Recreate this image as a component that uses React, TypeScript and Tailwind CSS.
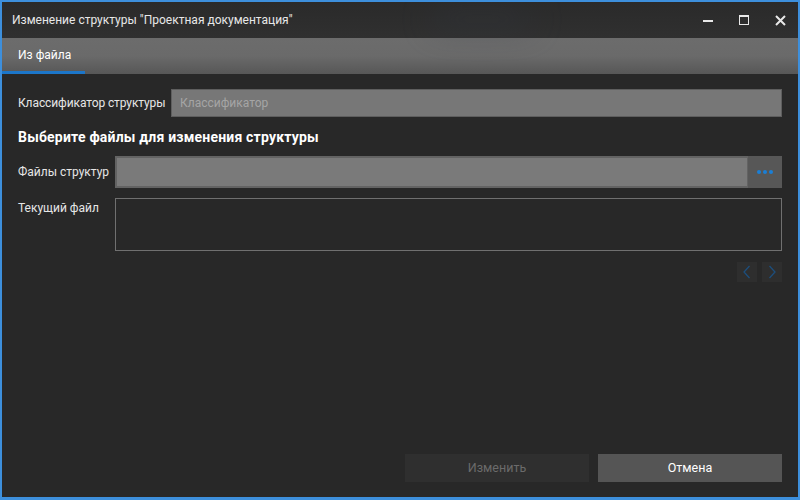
import React from "react";

export default function App() {
  const font = { fontFamily: 'Roboto, "Noto Sans", sans-serif' };
  return (
    <div
      className="w-[800px] h-[500px] border-2 border-b-[3px] border-[#3d8fdc] bg-[#282828] flex flex-col overflow-hidden text-[#e6e6e6]"
      style={font}
    >
      {/* Title bar */}
      <div className="h-[36px] shrink-0 flex items-center bg-gradient-to-b from-[#2a2a2a] to-[#303030] relative">
        <div className="absolute left-[430px] top-[10px] w-[100px] h-[14px] rounded-full bg-[#323842] blur-lg opacity-50" />
        <span className="pl-[10px] text-[12px] text-[#e8e8e8] whitespace-nowrap relative">
          Изменение структуры "Проектная документация"
        </span>
        <div className="ml-auto flex items-center h-full relative">
          <div className="w-[36px] h-full flex items-center justify-center">
            <div className="w-[10px] h-[2px] bg-[#e8e8e8] mt-[1px]" />
          </div>
          <div className="w-[36px] h-full flex items-center justify-center">
            <div className="w-[10px] h-[10px] border border-[#e8e8e8] border-t-[2px]" />
          </div>
          <div className="w-[36px] h-full flex items-center justify-center">
            <svg width="11" height="11" viewBox="0 0 11 11">
              <path d="M1 1L10 10M10 1L1 10" stroke="#e8e8e8" strokeWidth="2" />
            </svg>
          </div>
        </div>
      </div>

      {/* Tab bar */}
      <div className="h-[36px] shrink-0 bg-gradient-to-b from-[#6c6c6c] via-[#6a6a6a] to-[#575757] flex items-end">
        <div className="w-[83px] h-full flex flex-col">
          <div className="flex-1 flex items-center pl-[16px] text-[12px] text-white whitespace-nowrap">Из файла</div>
          <div className="h-[3px] bg-[#1c76c9]" />
        </div>
      </div>

      {/* Content */}
      <div className="flex-1 flex flex-col px-[16px] pt-[15px] pb-[15px]">
        <div className="flex items-center h-[28px]">
          <span className="text-[12px] w-[153px] shrink-0 whitespace-nowrap tracking-[-0.1px]">Классификатор структуры</span>
          <div className="flex-1 h-full bg-[#777777] border border-[#5e5e5e] flex items-center pl-[8px] text-[12px] text-[#a5a5a5]">
            Классификатор
          </div>
        </div>

        <div className="mt-[10px] text-[14px] font-bold text-white whitespace-nowrap tracking-[0.2px]">
          Выберите файлы для изменения структуры
        </div>

        <div className="mt-[8px] flex items-center h-[32px]">
          <span className="w-[97px] shrink-0 text-[12px] whitespace-nowrap">Файлы структур</span>
          <div className="flex-1 h-full flex bg-[#636363]">
            <div className="flex-1 m-[2px] mr-0 bg-[#7a7a7a]" />
            <div className="w-[34px] ml-[1px] bg-[#575757] flex items-center justify-center gap-[2px]">
              <span className="w-[4px] h-[4px] rounded-full bg-[#1a7fd6]" />
              <span className="w-[4px] h-[4px] rounded-full bg-[#1a7fd6]" />
              <span className="w-[4px] h-[4px] rounded-full bg-[#1a7fd6]" />
            </div>
          </div>
        </div>

        <div className="mt-[10px] flex items-start">
          <span className="w-[97px] shrink-0 text-[12px] whitespace-nowrap mt-[1px]">Текущий файл</span>
          <div className="flex-1 h-[53px] border border-[#707070]" />
        </div>

        <div className="mt-[11px] flex justify-end gap-[5px]">
          <div className="w-[20px] h-[20px] bg-[#2e2e2e] flex items-center justify-center">
            <svg width="10" height="14" viewBox="0 0 10 14">
              <path d="M7.5 1L2 7l5.5 6" stroke="#1d4e7c" strokeWidth="1.3" fill="none" />
            </svg>
          </div>
          <div className="w-[20px] h-[20px] bg-[#2e2e2e] flex items-center justify-center">
            <svg width="10" height="14" viewBox="0 0 10 14">
              <path d="M2.5 1L8 7l-5.5 6" stroke="#1d4e7c" strokeWidth="1.3" fill="none" />
            </svg>
          </div>
        </div>

        <div className="mt-auto flex justify-end gap-[9px]">
          <div className="w-[184px] h-[28px] bg-[#2f2f2f] flex items-center justify-center text-[12.5px] text-[#6b6b6b]">
            Изменить
          </div>
          <div className="w-[184px] h-[28px] bg-[#555555] flex items-center justify-center text-[12.5px] text-white">
            Отмена
          </div>
        </div>
      </div>
    </div>
  );
}
